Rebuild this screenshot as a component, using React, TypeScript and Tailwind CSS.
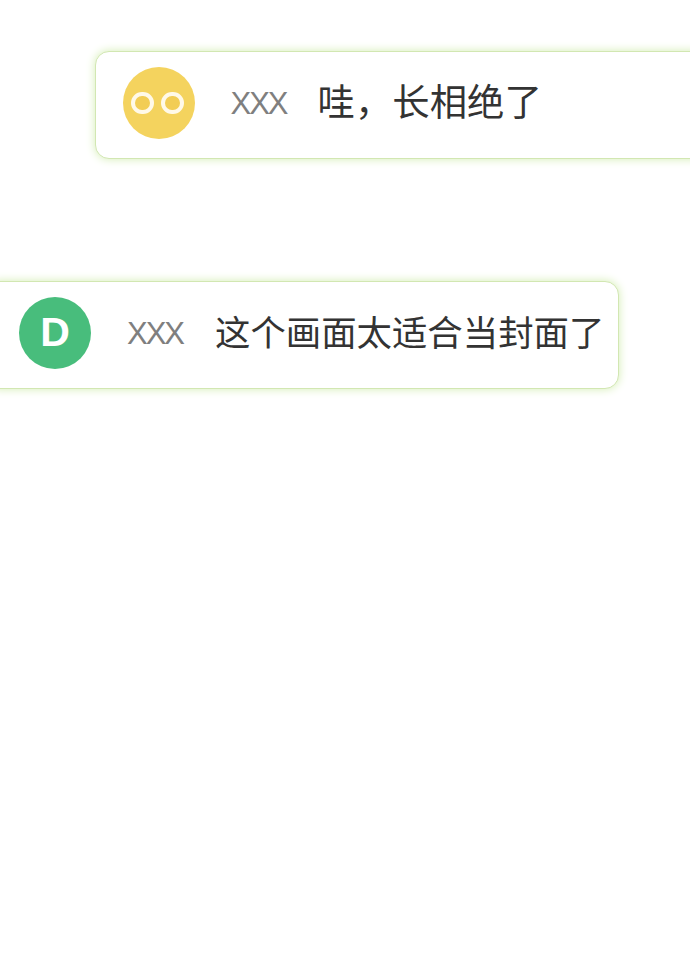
export default function App() {
  const font = { fontFamily: '"Noto Sans CJK SC", sans-serif' };
  return (
    <div className="w-[690px] h-[966px] overflow-hidden bg-white flex flex-col pt-[51px] font-['Liberation_Sans','Noto_Sans_CJK_SC',sans-serif]">
      <div className="ml-[95px] w-[640px] h-[108px] shrink-0 flex items-center pl-[26.5px] bg-white rounded-[14px] border-[1.5px] border-[#d2e7b2] shadow-[0_0_10px_#d3edb2]">
        <div className="relative mb-[4px] w-[72px] h-[72px] shrink-0 rounded-full bg-[#f4d35e]">
          <div className="absolute left-[8px] top-[25px] w-[23px] h-[22px] rounded-full border-[4.5px] border-[#fff9e8] bg-[#f2cd55]" />
          <div className="absolute left-[38px] top-[25px] w-[23px] h-[22px] rounded-full border-[4.5px] border-[#fff9e8] bg-[#f2cd55]" />
        </div>
        <span className="ml-[36px] mb-[3px] text-[31px] tracking-[-2px] leading-none text-[#7f7f7f]">XXX</span>
        <span className="ml-[31px] mb-[8px] text-[37.4px] leading-none text-[#333333]" style={font}>哇，长相绝了</span>
      </div>
      <div className="mt-[122px] -ml-[14px] w-[633px] h-[108px] shrink-0 flex items-center pl-[32px] bg-white rounded-[14px] border-[1.5px] border-[#d2e7b2] shadow-[0_0_10px_#d3edb2]">
        <div className="mb-[4px] w-[72px] h-[72px] shrink-0 rounded-full bg-[#48bd7c] flex items-center justify-center text-white text-[41px] font-bold">D</div>
        <span className="ml-[36px] mb-[3px] text-[31px] tracking-[-2px] leading-none text-[#7f7f7f]">XXX</span>
        <span className="ml-[32px] mb-[8px] text-[35.4px] leading-none text-[#333333]" style={font}>这个画面太适合当封面了</span>
      </div>
    </div>
  );
}
